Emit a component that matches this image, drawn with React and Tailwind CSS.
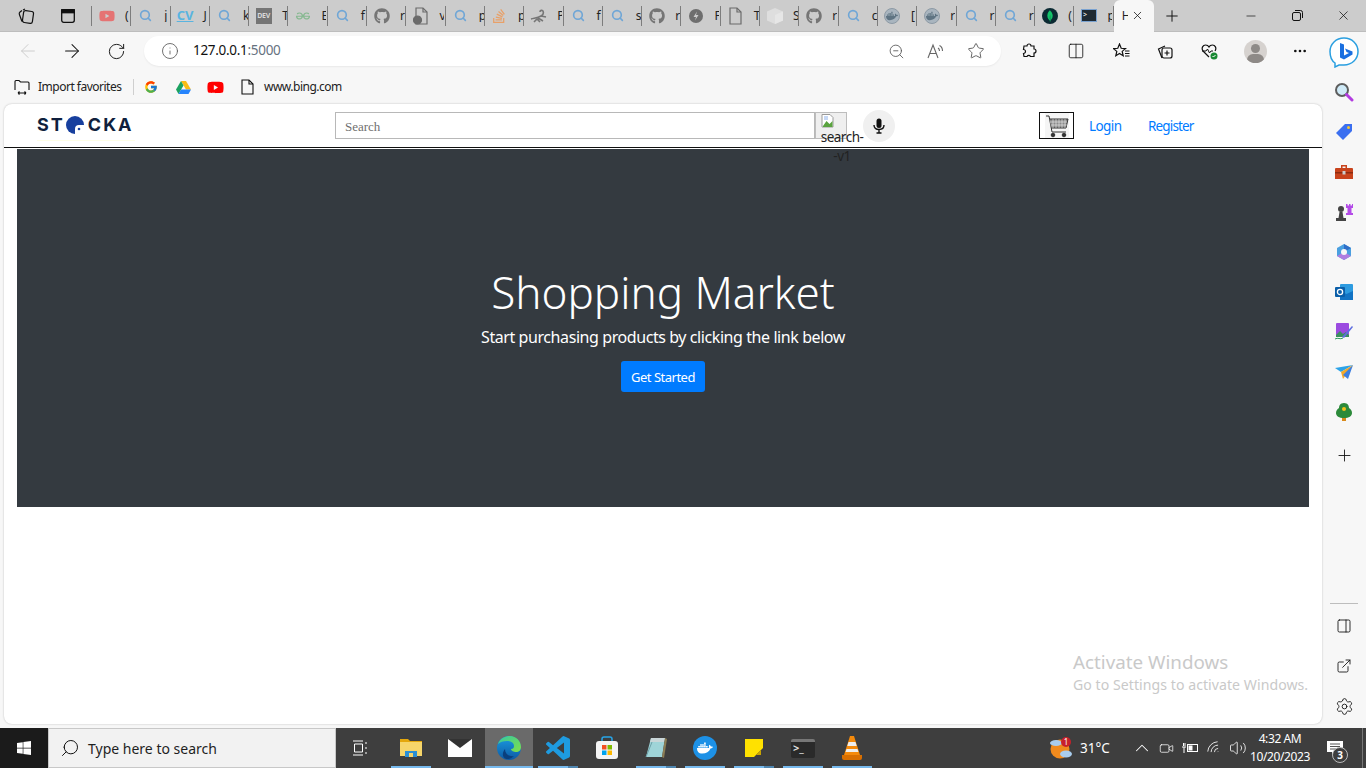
import React from 'react';
import {
  ArrowLeft, ArrowRight, RotateCw, Info, ZoomOut, Star, Plus, X, Minus, Settings, ExternalLink,
  Search, MoreHorizontal, ChevronUp, Volume2, Wifi, Video, Columns2, PanelRight,
} from 'lucide-react';
import { FaGithub, FaYoutube, FaDocker, FaStackOverflow, FaWindows } from 'react-icons/fa';
import { FcGoogle } from 'react-icons/fc';
import { SiGeeksforgeeks, SiMongodb } from 'react-icons/si';

const ui = { fontFamily: '"Noto Sans", "Open Sans", sans-serif' };

function TabSearch() {
  return <Search size={13} strokeWidth={3} className="text-[#6fa6d6]" />;
}
function TabFile({ x }) {
  return (
    <svg width="16" height="18" viewBox="0 0 16 18" fill="none" stroke="#6b6b6b" strokeWidth="1.2">
      <path d="M3 1h7l4 4v12H3z" />
      <path d="M10 1v4h4" />
      {x && <circle cx="4.5" cy="13" r="4" fill="#6b6b6b" />}
    </svg>
  );
}
function Scorpion() {
  return (
    <svg width="18" height="16" viewBox="0 0 18 16" fill="none" stroke="#767676" strokeWidth="1.6">
      <path d="M1 11c4-1 7-1 10-3 2-1 3-3 2-5-1-1-3-1-3 1" />
      <path d="M4 14l3-3 3 3M8 10l5 3M11 8l5 1" />
    </svg>
  );
}
function Bolt() {
  return (
    <svg width="14" height="14" viewBox="0 0 14 14">
      <circle cx="7" cy="7" r="7" fill="#6e6e6e" />
      <path d="M8 2.5 4.5 8H7l-1 3.5L9.5 6H7z" fill="#ccc" />
    </svg>
  );
}
function Cube() {
  return (
    <svg width="16" height="16" viewBox="0 0 16 16">
      <path d="M8 0l8 3.5v9L8 16l-8-3.5v-9z" fill="#dedede" />
      <path d="M8 7l8-3.5v9L8 16z" fill="#e6e6e6" />
    </svg>
  );
}
function DockerRound() {
  return (
    <span className="w-[16px] h-[16px] rounded-full border border-[#8d9aa5] bg-[#a9b5bf] flex items-center justify-center">
      <FaDocker size={12} className="text-[#5f7483]" />
    </span>
  );
}
function TerminalTab() {
  return (
    <span className="w-[16px] h-[13px] bg-[#1f2a33] border border-[#7aa2d0] text-white text-[7px] leading-[10px] pl-px">&gt;</span>
  );
}

const tabs = [
  [<FaYoutube size={16} className="text-[#e57373]" />, '('],
  [<TabSearch />, 'j'],
  [<span className="text-[#59b4e0] text-[13px] font-bold leading-none underline" style={ui}>CV</span>, 'J'],
  [<TabSearch />, 'k'],
  [<span className="w-[16px] h-[16px] bg-[#757575] text-[#d8d8d8] text-[7px] font-bold leading-[16px] text-center tracking-[-0.2px]" style={ui}>DEV</span>, 'T'],
  [<SiGeeksforgeeks size={14} className="text-[#85b88f]" />, 'E'],
  [<TabSearch />, 'f'],
  [<FaGithub size={16} className="text-[#757575]" />, 'r'],
  [<TabFile x />, 'v'],
  [<TabSearch />, 'p'],
  [<FaStackOverflow size={16} className="text-[#e8a068]" />, 'p'],
  [<Scorpion />, 'P'],
  [<TabSearch />, 'f'],
  [<TabSearch />, 's'],
  [<FaGithub size={16} className="text-[#757575]" />, 'r'],
  [<Bolt />, 'F'],
  [<TabFile />, 'T'],
  [<Cube />, 'S'],
  [<FaGithub size={16} className="text-[#757575]" />, 'r'],
  [<TabSearch />, 'c'],
  [<DockerRound />, '['],
  [<DockerRound />, 'r'],
  [<TabSearch />, 'r'],
  [<TabSearch />, 'r'],
  [<span className="w-[16px] h-[16px] rounded-full bg-[#0b2a33] flex items-center justify-center"><SiMongodb size={12} className="text-[#13c46a]" /></span>, '('],
  [<TerminalTab />, 'p'],
];

function TabStrip() {
  return (
    <div className="h-[32px] flex items-center bg-[#cccccc] border-b border-[#bdbdbd]" style={ui}>
      <div className="w-[52px] flex justify-center">
        <svg width="18" height="18" viewBox="0 0 18 18" fill="none" stroke="#111" strokeWidth="1.2">
          <rect x="6" y="4" width="10" height="12" rx="2" transform="rotate(8 11 10)" />
          <path d="M5 3.5 3 5c-1 .8-1 1.5-.6 2.5l2.6 7M8 2 6 3" />
        </svg>
      </div>
      <div className="w-[32px] flex justify-center">
        <svg width="14" height="14" viewBox="0 0 14 14" fill="none" stroke="#111" strokeWidth="1.3">
          <rect x=".7" y=".7" width="12.6" height="12.6" rx="2" />
          <rect x=".7" y=".7" width="12.6" height="3" fill="#111" />
        </svg>
      </div>
      <div className="w-[8px] h-[20px] border-r border-[#7d7d7d]" />
      {tabs.map(([icon, letter], i) => (
        <div key={i} className="w-[39.3px] h-[20px] flex items-center border-r border-[#7d7d7d] shrink-0">
          <span className="w-[29px] flex justify-center items-center">{icon}</span>
          <span className="w-[9px] pl-[4px] overflow-hidden text-[12px] text-[#222] leading-none">{letter}</span>
        </div>
      ))}
      <div className="w-[40px] h-[32px] bg-[#f7f7f7] rounded-t-md flex items-center shrink-0">
        <span className="w-[14px] pl-[8px] overflow-hidden text-[12px] text-[#222]">H</span>
        <span className="w-[20px] flex justify-center"><X size={13} strokeWidth={1.4} className="text-[#111]" /></span>
      </div>
      <span className="w-[36px] flex justify-center"><Plus size={18} strokeWidth={1.3} className="text-[#111]" /></span>
      <div className="flex-1" />
      <span className="w-[46px] flex justify-center"><Minus size={14} strokeWidth={1.2} className="text-[#111]" /></span>
      <span className="w-[46px] flex justify-center">
        <svg width="11" height="11" viewBox="0 0 11 11" fill="none" stroke="#111">
          <rect x=".5" y="2.5" width="8" height="8" rx="1.5" />
          <path d="M3 .5h5.5a2 2 0 0 1 2 2V8" />
        </svg>
      </span>
      <span className="w-[46px] flex justify-center"><X size={15} strokeWidth={1.2} className="text-[#111]" /></span>
    </div>
  );
}

function ToolBtn({ w = 'w-[44px]', children }) {
  return <span className={`${w} flex justify-center items-center shrink-0`}>{children}</span>;
}

function Toolbar() {
  return (
    <div className="h-[38px] flex items-center pl-[6px]" style={ui}>
      <ToolBtn><ArrowLeft size={22} strokeWidth={1} className="text-[#c9c9c9]" /></ToolBtn>
      <ToolBtn><ArrowRight size={22} strokeWidth={1.1} className="text-[#111]" /></ToolBtn>
      <ToolBtn><RotateCw size={19} strokeWidth={1.2} className="text-[#111]" /></ToolBtn>
      <div className="ml-[6px] w-[857px] h-[30px] rounded-full bg-white shadow-[0_1px_2px_rgba(0,0,0,0.06)] flex items-center shrink-0">
        <Info size={18} strokeWidth={1.1} className="ml-[17px] text-[#555]" />
        <span className="ml-[14px] text-[13.5px] text-[#111] leading-none tracking-[-0.3px]">127.0.0.1<span className="text-[#66727f]">:5000</span></span>
        <div className="flex-1" />
        <ZoomOut size={17} strokeWidth={1.2} className="text-[#555]" />
        <svg width="18" height="16" viewBox="0 0 18 16" fill="none" stroke="#666" strokeWidth="1.1" className="ml-[22px]">
          <path d="M1 15 6 2l5 13M3 10.500h6" />
          <path d="M11 5c1 .5 1.500 1.500 1.500 3M12.500 2.500c2 1 3 3 3 5.500" />
        </svg>
        <Star size={18} strokeWidth={1.2} className="ml-[22px] mr-[16px] text-[#555]" />
      </div>
      <ToolBtn w="w-[44px] ml-[6px]">
        <svg width="16" height="16" viewBox="0 0 16 16" fill="none" stroke="#111" strokeWidth="1.2">
          <path d="M6 3a2 2 0 0 1 4 0h3v3a2 2 0 0 1 0 4v3.500H9.500a2 2 0 0 0-3.500 0H3l-.5-3a2 2 0 0 0 0-4L3 3z" />
        </svg>
      </ToolBtn>
      <span className="w-px h-[16px] bg-[#d0d0d0] ml-[1px] mr-[2px]" />
      <ToolBtn><Columns2 size={18} strokeWidth={1.1} className="text-[#111]" /></ToolBtn>
      <ToolBtn w="w-[44px] ml-[1px]">
        <svg width="17" height="16" viewBox="0 0 17 16" fill="none" stroke="#111" strokeWidth="1.2">
          <path d="M6.500 1l1.700 4.300 4.300.3-3.300 2.800 1 4.400-3.700-2.400-3.700 2.400 1-4.400L.5 5.600l4.300-.3z" />
          <path d="M12 8h4.500M12 10.500h4.500M12 13h4.500" />
        </svg>
      </ToolBtn>
      <ToolBtn>
        <svg width="16" height="16" viewBox="0 0 16 16" fill="none" stroke="#111" strokeWidth="1.2">
          <path d="M5 15 1.500 6 8 3" />
          <rect x="5" y="5" width="10" height="10" rx="2" />
          <path d="M10 7.500v5M7.500 10h5" />
        </svg>
      </ToolBtn>
      <ToolBtn>
        <svg width="17" height="17" viewBox="0 0 17 17" fill="none">
          <path d="M8 14 2 8C0 5 2 2 4.500 2 6 2 7.500 3 8 4c.5-1 2-2 3.500-2C14 2 16 5 14 8" stroke="#111" strokeWidth="1.2" />
          <path d="M1 8h4l1.500-2L8.500 10 10 8h2" stroke="#111" />
          <circle cx="13" cy="13" r="3.500" fill="#1a8a34" />
          <path d="M11.500 13l1 1 2-2" stroke="#fff" />
        </svg>
      </ToolBtn>
      <ToolBtn w="w-[44px] ml-[2px]">
        <span className="relative w-[23px] h-[23px] rounded-full bg-[#d6d2cf] overflow-hidden flex justify-center">
          <span className="absolute top-[4px] w-[9px] h-[9px] rounded-full bg-[#8e8a87]" />
          <span className="absolute top-[14px] w-[17px] h-[12px] rounded-full bg-[#8e8a87]" />
        </span>
      </ToolBtn>
      <ToolBtn w="w-[44px] ml-px"><MoreHorizontal size={16} strokeWidth={2} className="text-[#111]" /></ToolBtn>
    </div>
  );
}

function FavBar() {
  return (
    <div className="h-[34px] flex items-center text-[12px] text-[#222] tracking-[-0.5px]" style={ui}>
      <span className="ml-[14px] w-[16px]">
        <svg width="16" height="16" viewBox="0 0 16 16" fill="none" stroke="#111" strokeWidth="1.1">
          <path d="M1 11V2.500C1 2 1.500 1.500 2 1.500h3l1.500 1.500H14c.6 0 1 .4 1 1v7" />
          <path d="M4 14h8M4 14l1.500-1.500M4 14l1.500 1.500M12 14l-1.500-1.500M12 14l-1.500 1.500" />
        </svg>
      </span>
      <span className="ml-[8px] w-[85px] whitespace-nowrap">Import favorites</span>
      <span className="ml-[10px] w-px h-[16px] bg-[#cfcfcf]" />
      <span className="ml-[10px] w-[14px]"><FcGoogle size={14} /></span>
      <span className="ml-[18px] w-[16px]">
        <svg width="15" height="13" viewBox="0 0 15 13">
          <path d="M5 0h5l5 8.500h-5z" fill="#f9bc15" />
          <path d="M5 0 0 8.500 2.500 13l5-8.500z" fill="#1ba261" />
          <path d="M5 8.500h10L12.500 13h-10z" fill="#2684fc" />
        </svg>
      </span>
      <span className="ml-[15px] w-[16px]"><FaYoutube size={17} className="text-[#f00]" /></span>
      <span className="ml-[18px] w-[13px]"><TabFileBlack /></span>
      <span className="ml-[10px] whitespace-nowrap">www.bing.com</span>
    </div>
  );
}

function TabFileBlack() {
  return (
    <svg width="13" height="16" viewBox="0 0 13 16" fill="none" stroke="#111" strokeWidth="1.1">
      <path d="M1 1h7l4 4v10H1z" />
      <path d="M8 1v4h4" />
    </svg>
  );
}

function Logo() {
  return (
    <div className="relative ml-[33px] w-[298px] -mt-[2px] flex items-center text-[#0f1f3d] text-[18px] font-bold tracking-[2px] leading-none" style={{ fontFamily: 'Inter, sans-serif' }}>
      <span>ST</span>
      <svg width="18" height="18" viewBox="0 0 18 18" className="ml-[1px]">
        <circle cx="9" cy="9" r="9" fill="#173f9e" />
        <path d="M9 13a4 4 0 0 1 4-4h5v9H9z" fill="#fff" />
        <circle cx="13" cy="13" r="1.300" fill="#173f9e" />
      </svg>
      <span className="ml-[4px]">CKA</span>
      <span className="absolute left-0 top-[24px] w-[98px] h-px bg-[#fdfde6]" />
    </div>
  );
}

function CartIcon() {
  return (
    <svg width="24" height="24" viewBox="0 0 24 24" fill="none" stroke="#333" strokeWidth="1">
      <path d="M1 2h3l3 16h14" />
      <path d="M4.500 5H23l-2 9H6" fill="#8a8a8a" />
      <path d="M8 5v9M11 5v9M14 5v9M17 5v9M20 5v9M5 8h17M6 11h16" stroke="#eee" strokeWidth=".6" />
      <circle cx="8" cy="21" r="1.800" fill="#333" />
      <circle cx="19" cy="21" r="1.800" fill="#333" />
    </svg>
  );
}

function Navbar() {
  return (
    <div className="relative z-10 h-[44px] flex items-center border-b border-[#111]">
      <Logo />
      <div className="w-[480px] h-[27px] border border-[#b8b8b8] flex items-center pt-[2px] pl-[9px] shrink-0 text-[13px] text-[#6f6f6f] leading-none" style={{ fontFamily: '"Liberation Serif", serif' }}>Search</div>
      <div className="w-[32px] h-[27px] bg-[#efefef] border border-[#bdbdbd] shrink-0 text-[13.5px] text-[#222] leading-[19px] text-center" style={ui}>
        <svg width="14" height="14" viewBox="0 0 14 14" className="ml-[5px] mt-[1px]" fill="none">
          <path d="M1 .5h8l3 3v9.500H1z" fill="#fff" stroke="#9a9a9a" />
          <path d="M2 12l3.500-5 3 3 3-3v6H2z" fill="#5aa33f" />
          <path d="M3 2h4v4H3z" fill="#c6d8f5" />
        </svg>
        <div className="w-[32px] flex flex-col items-center tracking-[-0.5px] whitespace-nowrap">
          <span className="relative left-[10px]">search-</span>
          <span className="relative left-[10px]">-v1</span>
        </div>
      </div>
      <span className="ml-[16px] w-[32px] h-[32px] rounded-full bg-[#f0f0f0] flex items-center justify-center shrink-0">
        <svg width="12" height="16" viewBox="0 0 12 16" fill="none">
          <rect x="3.500" y="0.500" width="5" height="9.500" rx="2.500" fill="#111" />
          <path d="M1 7c0 3 2 4.500 5 4.500S11 10 11 7M6 11.500V15M3.500 15h5" stroke="#111" strokeWidth="1.4" />
        </svg>
      </span>
      <span className="ml-[144px] w-[35px] h-[27px] border border-[#111] flex items-center justify-center shrink-0">
        <span className="w-[24px] h-[25px] bg-[#f5f5f5] flex items-center justify-center"><CartIcon /></span>
      </span>
      <a className="ml-[15px] pt-[2px] w-[32px] text-[#007bff] text-[13.5px] tracking-[-0.6px] whitespace-nowrap" style={ui}>Login</a>
      <a className="ml-[27px] pt-[2px] text-[#007bff] text-[13.5px] tracking-[-0.85px] whitespace-nowrap" style={ui}>Register</a>
    </div>
  );
}

function Hero() {
  return (
    <div className="mt-px mx-[13px] h-[358px] bg-[#343a40] flex flex-col items-center text-white" style={ui}>
      <h1 className="mt-[113px] text-[44px] font-light leading-[60px] whitespace-nowrap">Shopping Market</h1>
      <p className="mt-[3px] text-[16px] leading-[24px] whitespace-nowrap tracking-[-0.42px]">Start purchasing products by clicking the link below</p>
      <button className="mt-[12px] w-[84px] h-[31px] pt-[2px] rounded-[3px] bg-[#007bff] text-[13px] text-white tracking-[-0.5px]">Get Started</button>
    </div>
  );
}

function Edge() {
  return (
    <svg width="24" height="24" viewBox="0 0 24 24">
      <defs>
        <linearGradient id="edgeA" x1="0" y1="0" x2="1" y2="1">
          <stop offset="0" stopColor="#36c8a0" />
          <stop offset="1" stopColor="#7fe04a" />
        </linearGradient>
        <linearGradient id="edgeB" x1="0" y1="0" x2="0" y2="1">
          <stop offset="0" stopColor="#1b9de2" />
          <stop offset="1" stopColor="#0c59a4" />
        </linearGradient>
      </defs>
      <circle cx="12" cy="12" r="12" fill="url(#edgeB)" />
      <path d="M1 8c2-6 8-8 12-8 6 0 11 5 11 11 0 3-2 5-5 5-2 0-5-1-5-3 2 0 3-1 3-3 0-3-3-5-7-5C6 5 3 6 1 8z" fill="url(#edgeA)" />
      <path d="M8 13c0 5 4 8 9 7-2 2-4 3-6 3-5 0-7-5-3-10z" fill="#0a3f7d" />
    </svg>
  );
}

function Store() {
  return (
    <svg width="24" height="24" viewBox="0 0 24 24">
      <path d="M7 6V3a2 2 0 0 1 2-2h6a2 2 0 0 1 2 2v3" fill="none" stroke="#27a5e8" strokeWidth="1.500" />
      <rect x="1" y="5" width="22" height="18" rx="3" fill="#f4f4f4" />
      <rect x="7" y="9" width="4.500" height="4.500" fill="#f25022" />
      <rect x="12.500" y="9" width="4.500" height="4.500" fill="#7fba00" />
      <rect x="7" y="14.500" width="4.500" height="4.500" fill="#00a4ef" />
      <rect x="12.500" y="14.500" width="4.500" height="4.500" fill="#ffb900" />
    </svg>
  );
}

function Notepad() {
  return (
    <svg width="24" height="24" viewBox="0 0 24 24">
      <path d="M7 2h14l-3 19H2z" fill="#9fd4d8" />
      <path d="M7 2h14l-1 4H6z" fill="#c9d6d8" />
      <path d="M21 2l2 1-3 19-2-1z" fill="#8b7d55" />
      <path d="M2 21 8 6" stroke="#6da0a8" />
    </svg>
  );
}

function Explorer() {
  return (
    <svg width="22" height="20" viewBox="0 0 22 20">
      <path d="M0 1h8l2 2h12v15H0z" fill="#e4a70c" />
      <path d="M0 4h22v14H0z" fill="#f6d56a" />
      <path d="M5 13h12v6H5z" fill="#2a8fd6" />
      <path d="M9 15h4v4H9z" fill="#f6d56a" />
    </svg>
  );
}

function TaskBtn({ active, line, double, children }) {
  return (
    <div className={`relative w-[48px] h-full flex items-center justify-center shrink-0 ${active ? 'bg-[#6a6a6a]' : ''}`}>
      {children}
      {line && <span className={`absolute bottom-0 h-[2px] ${active ? 'left-0 w-[48px]' : 'left-[4px] w-[40px]'} bg-[#76b9ed]`} />}
      {double && <span className="absolute bottom-0 left-[34px] w-[10px] h-[2px] bg-[#4f86b0]" />}
    </div>
  );
}

function Taskbar() {
  return (
    <div className="h-[40px] flex items-center bg-[#3e3e3e] text-white" style={ui}>
      <div className="w-[48px] h-full bg-[#1b1b1b] flex items-center justify-center"><FaWindows size={16} /></div>
      <div className="w-[288px] h-full bg-[#f2f2f2] border border-[#c8c8c8] flex items-center text-[14px] text-[#1f1f1f]">
        <Search size={20} strokeWidth={1.2} className="ml-[11px] -scale-x-100 text-[#111]" />
        <span className="ml-[8px] whitespace-nowrap">Type here to search</span>
      </div>
      <TaskBtn>
        <svg width="16" height="16" viewBox="0 0 16 16" fill="none" stroke="#fff">
          <path d="M1 1h10M1 15h10M2.500 4h8v8h-8zM14 2v2M14 7v2M14 12v2" />
        </svg>
      </TaskBtn>
      <div className="w-[3px]" />
      <TaskBtn line><Explorer /></TaskBtn>
      <div className="w-px" />
      <TaskBtn>
        <svg width="24" height="18" viewBox="0 0 24 18">
          <rect width="24" height="18" fill="#fff" />
          <path d="M0 0l12 9L24 0" fill="#333" />
        </svg>
      </TaskBtn>
      <div className="w-px" />
      <TaskBtn active line><Edge /></TaskBtn>
      <div className="w-px" />
      <TaskBtn line double>
        <svg width="24" height="24" viewBox="0 0 24 24">
          <path fill="#1e9be0" d="M23.15 2.587L18.21.21a1.494 1.494 0 0 0-1.705.29l-9.46 8.63-4.12-3.128a.999.999 0 0 0-1.276.057L.327 7.261A1 1 0 0 0 .326 8.74L3.899 12 .326 15.26a1 1 0 0 0 .001 1.479L1.65 17.94a.999.999 0 0 0 1.276.057l4.12-3.128 9.46 8.63a1.492 1.492 0 0 0 1.704.29l4.942-2.377A1.5 1.5 0 0 0 24 20.06V3.939a1.5 1.5 0 0 0-.85-1.352zm-5.146 14.861L10.826 12l7.178-5.448v10.896z" />
        </svg>
      </TaskBtn>
      <div className="w-px" />
      <TaskBtn><Store /></TaskBtn>
      <div className="w-px" />
      <TaskBtn line double><Notepad /></TaskBtn>
      <div className="w-px" />
      <TaskBtn line>
        <span className="w-[24px] h-[24px] rounded-full bg-[#1d91e6] flex items-center justify-center"><FaDocker size={16} className="text-white" /></span>
      </TaskBtn>
      <div className="w-px" />
      <TaskBtn line double>
        <svg width="18" height="18" viewBox="0 0 18 18">
          <rect width="18" height="18" fill="#ffe100" />
          <path d="M18 9v9H9z" fill="#3e3e3e" />
          <path d="M16 11v5H11z" fill="#c9a400" />
        </svg>
      </TaskBtn>
      <div className="w-px" />
      <TaskBtn line>
        <span className="w-[24px] h-[19px] rounded-[2px] bg-[#2a2a2a] border-t-[3px] border-[#777] text-[#ddd] text-[11px] leading-[12px] pl-[2px] font-bold">&gt;_</span>
      </TaskBtn>
      <div className="w-px" />
      <TaskBtn line>
        <svg width="20" height="24" viewBox="0 0 20 24">
          <path d="M8 0h4l6 19H2z" fill="#f58a0b" />
          <path d="M6.500 6h7l1.200 4H5.300zM4.500 13h11l1 3h-13z" fill="#eee" />
          <path d="M0 19h20v3a2 2 0 0 1-2 2H2a2 2 0 0 1-2-2z" fill="#d96f00" />
        </svg>
      </TaskBtn>
      <div className="flex-1" />
      <svg width="24" height="24" viewBox="0 0 24 24">
        <circle cx="11" cy="13" r="9.500" fill="#f08a1d" />
        <ellipse cx="7" cy="7" rx="6" ry="3" fill="#a9cdee" />
        <ellipse cx="17" cy="18" rx="6" ry="3.500" fill="#a9cdee" />
        <circle cx="17" cy="6" r="5" fill="#c8202a" />
        <text x="17" y="9" fontSize="8" fill="#fff" textAnchor="middle">1</text>
      </svg>
      <span className="ml-[7px] w-[50px] text-[13.5px]">31°C</span>
      <span className="w-[24px] flex justify-center"><ChevronUp size={22} strokeWidth={1.1} /></span>
      <span className="w-[24px] flex justify-center"><Video size={15} strokeWidth={1.2} /></span>
      <span className="w-[24px] flex justify-center">
        <svg width="16" height="12" viewBox="0 0 16 12" fill="none" stroke="#fff">
          <rect x="5.500" y="2.500" width="10" height="7" />
          <rect x="6.500" y="3.500" width="4" height="5" fill="#fff" stroke="none" />
          <path d="M0 5h4M1.500 1v3M3 1v3M2 5v6" />
        </svg>
      </span>
      <span className="w-[24px] flex justify-center"><Wifi size={16} strokeWidth={1.2} className="-rotate-45" /></span>
      <span className="w-[24px] flex justify-center"><Volume2 size={18} strokeWidth={1.1} /></span>
      <div className="w-[60px] flex flex-col items-center text-[12px] leading-[18px] whitespace-nowrap tracking-[-0.4px]">
        <span>4:32 AM</span>
        <span>10/20/2023</span>
      </div>
      <div className="relative w-[46px] ml-[2px] flex justify-center">
        <svg width="16" height="14" viewBox="0 0 16 14">
          <path d="M0 0h16v11H7l-2 3v-3H0z" fill="#fff" />
          <path d="M3 3h10M3 5.500h10M3 8h7" stroke="#555" />
        </svg>
        <span className="absolute left-[20px] top-[6px] w-[16px] h-[16px] rounded-full border border-[#bbb] bg-[#3e3e3e] text-[10px] leading-[14px] text-center font-bold">3</span>
      </div>
      <span className="ml-[4px] w-px h-[40px] bg-[#777]" />
      <span className="w-[3px]" />
    </div>
  );
}

function SideIcon({ children }) {
  return <div className="h-[40px] flex items-center justify-center shrink-0">{children}</div>;
}

function Sidebar() {
  return (
    <div className="w-[44px] flex flex-col shrink-0">
      <div className="h-[40px] flex items-center justify-center">
        <svg width="30" height="31" viewBox="0 0 30 31">
          <path d="M15 1c8 0 14 6 14 13.500S23 28 15 28c-2 0-3 0-5 0l-4 2 0-4C3 24 1 19 1 14.500 1 7 7 1 15 1z" fill="#fff" stroke="#2a9fe0" strokeWidth="1.500" />
          <path d="M11 6l4 1.500v11l5-2.500-2.500-1-1.500-3.500 7.500 3v3l-8.500 5-4-2z" fill="#1a6fe0" />
        </svg>
      </div>
      <SideIcon>
        <svg width="20" height="20" viewBox="0 0 20 20">
          <circle cx="8" cy="8" r="6" fill="#cfeaf7" stroke="#5d5d5d" strokeWidth="2" />
          <path d="M12.500 12.500 18 18" stroke="#b23ce0" strokeWidth="3" strokeLinecap="round" />
        </svg>
      </SideIcon>
      <SideIcon>
        <svg width="18" height="18" viewBox="0 0 18 18">
          <path d="M10 1h7v7l-9 9-7-7z" fill="#3b6ff0" />
          <circle cx="13.500" cy="4.500" r="1.500" fill="#f4c531" />
        </svg>
      </SideIcon>
      <SideIcon>
        <svg width="18" height="16" viewBox="0 0 18 16">
          <path d="M6 1h6v3h5a1 1 0 0 1 1 1v10H0V5a1 1 0 0 1 1-1h5zM7.500 2.500V4h3V2.500z" fill="#c8431c" fillRule="evenodd" />
          <rect y="8" width="18" height="1.500" fill="#8e2c10" />
          <rect x="7.500" y="7" width="3" height="3.500" fill="#ccc" />
        </svg>
      </SideIcon>
      <SideIcon>
        <svg width="18" height="18" viewBox="0 0 18 18">
          <circle cx="6" cy="6" r="3" fill="#444" />
          <path d="M4.500 9h3l1 6h-5zM1 15h10v3H1z" fill="#444" />
          <path d="M11 1h1.500v1.500h1.500V1h1.500v1.500H17V1h1v4h-1.500v5H18v2h-7v-2h1.500V5H11z" fill="#b44be8" />
        </svg>
      </SideIcon>
      <SideIcon>
        <svg width="18" height="18" viewBox="0 0 18 18" fill="none">
          <path d="M9 1 16 5v8l-7 4-7-4V5z" fill="#4aa0e0" />
          <path d="M9 1 16 5 9 9z" fill="#2f6fc8" />
          <path d="M2 13l7 4 7-4-7-4z" fill="#b07de0" />
          <circle cx="9" cy="9" r="3" fill="#f7f7f7" />
        </svg>
      </SideIcon>
      <SideIcon>
        <svg width="18" height="16" viewBox="0 0 18 16">
          <rect x="5" width="13" height="15" rx="1" fill="#2d9be0" />
          <path d="M5 7l6.500 3L18 7v9H5z" fill="#1273c4" />
          <rect y="3" width="10" height="10" rx="1" fill="#0a5ea8" />
          <circle cx="5" cy="8" r="2.600" fill="none" stroke="#fff" strokeWidth="1.300" />
        </svg>
      </SideIcon>
      <SideIcon>
        <svg width="18" height="18" viewBox="0 0 18 18">
          <rect x="1" width="13" height="14" rx="1" fill="#9b4be0" />
          <path d="M1 12l4-4 3 3 3-2 3 3v2H1z" fill="#3b8f60" />
          <path d="M7 14 17 3l1 1L9 15z" fill="#5f6ee0" />
          <path d="M0 16c3-2 5 1 8-1" stroke="#2e9f5f" fill="none" />
        </svg>
      </SideIcon>
      <SideIcon>
        <svg width="18" height="14" viewBox="0 0 18 14">
          <path d="M0 3 18 0 6 7z" fill="#2da3e8" />
          <path d="M18 0 6 7l2 7z" fill="#f4a92a" />
          <path d="M18 0 13 14 8 10z" fill="#3d7fe0" />
        </svg>
      </SideIcon>
      <SideIcon>
        <svg width="16" height="18" viewBox="0 0 16 18">
          <rect x="6" y="13" width="4" height="5" fill="#d98a1a" />
          <path d="M8 0c4 0 5 3 5 5 2 1 3 3 3 5 0 3-3 5-8 5s-8-2-8-5c0-2 1-4 3-5 0-2 1-5 5-5z" fill="#2c8a3a" />
          <circle cx="8" cy="6" r="2" fill="#f2c21a" />
        </svg>
      </SideIcon>
      <div className="h-[47px] flex items-center justify-center"><Plus size={19} strokeWidth={1.1} className="text-[#111]" /></div>
      <div className="flex-1" />
      <div className="mx-[8px] h-px bg-[#bdbdbd] mb-[2px]" />
      <SideIcon><PanelRight size={16} strokeWidth={1.3} className="text-[#111]" /></SideIcon>
      <SideIcon><ExternalLink size={16} strokeWidth={1.3} className="text-[#111]" /></SideIcon>
      <SideIcon><Settings size={19} strokeWidth={1.1} className="text-[#111]" /></SideIcon>
      <div className="h-[2px]" />
    </div>
  );
}

export default function App() {
  return (
    <div className="w-[1366px] h-[768px] flex flex-col overflow-hidden bg-[#f7f7f7]">
      <TabStrip />
      <div className="flex-1 flex min-h-0">
        <div className="w-[1322px] flex flex-col shrink-0">
          <Toolbar />
          <FavBar />
          <div className="relative ml-[4px] mb-[4px] flex-1 bg-white rounded-lg shadow-[0_0_2px_rgba(0,0,0,0.25)]">
            <Navbar />
            <Hero />
            <div className="absolute left-[1069px] top-[546px] text-[#c9c9c9] whitespace-nowrap" style={ui}>
              <div className="text-[18.800px] leading-[24px]">Activate Windows</div>
              <div className="text-[14.100px] leading-[22px] tracking-[0.05px]">Go to Settings to activate Windows.</div>
            </div>
          </div>
        </div>
        <Sidebar />
      </div>
      <Taskbar />
    </div>
  );
}
